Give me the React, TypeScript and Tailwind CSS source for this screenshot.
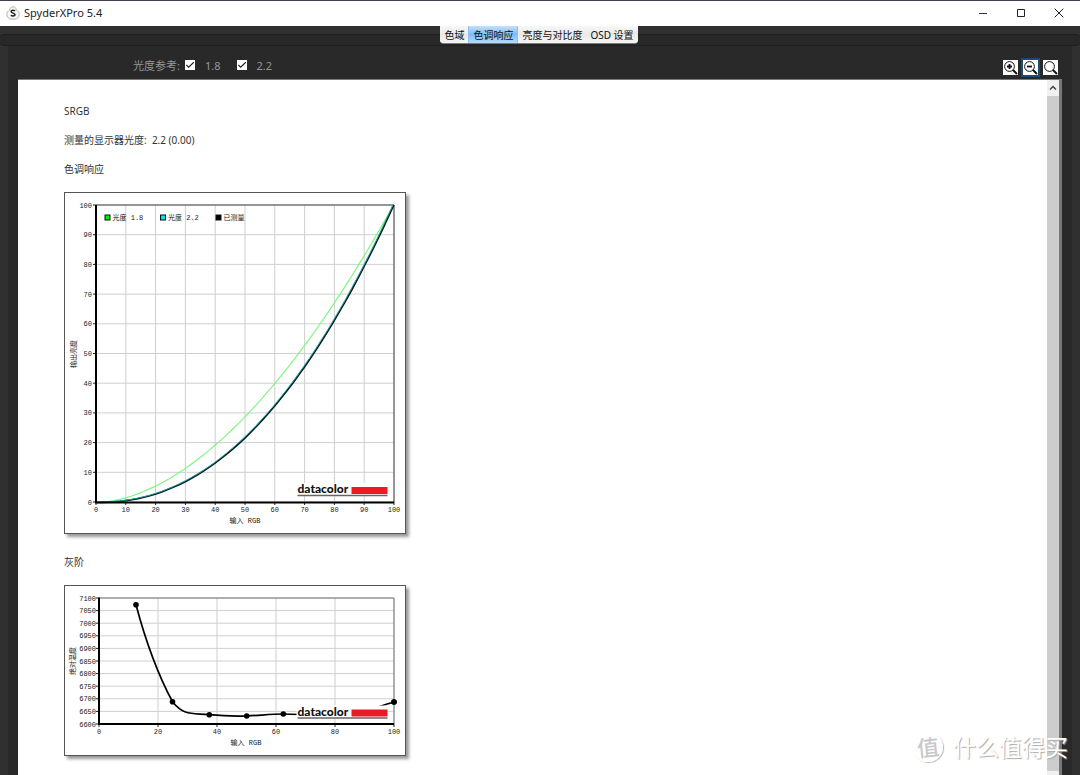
import { useState } from 'react';
import type { ReactNode } from 'react';
import clsx from 'clsx';

const TABS = ['色域', '色调响应', '亮度与对比度', 'OSD 设置'];

const GRID_COLOR = '#cfcfcf';

interface Point {
  x: number;
  y: number;
}

const gammaPath = (gamma: number, left: number, top: number, size: number) => {
  const points: Point[] = [];
  for (let i = 0; i <= 100; i += 2) {
    points.push({
      x: left + (i / 100) * size,
      y: top + (1 - Math.pow(i / 100, gamma)) * size,
    });
  }
  return points.map((p, i) => `${i ? 'L' : 'M'}${p.x.toFixed(1)} ${p.y.toFixed(1)}`).join(' ');
};

function AppIcon() {
  return (
    <svg viewBox="0 0 14 14" className="h-3.5 w-3.5" aria-hidden="true">
      <path
        d="M7 .8c1.900 0 3.200 1.300 3.300 3.200 1.700.7 2.900 2.200 2.900 4.200 0 2.800-2 4.900-4.400 4.900H5.200C2.800 13.100.8 11 .8 8.200c0-2 1.200-3.500 2.900-4.200C3.800 2.100 5.100.8 7 .8z"
        fill="#f6f6f6"
        stroke="#b4b4b4"
      />
      <path
        d="M9 4.900C8.400 4.400 7.700 4.200 7 4.200c-1.200 0-1.900.6-1.900 1.400 0 1.900 3.900 1.100 3.900 3 0 .9-.8 1.400-2 1.400-.8 0-1.600-.2-2.100-.7"
        fill="none"
        stroke="#222"
        strokeWidth="1.500"
      />
    </svg>
  );
}

function TitleBar() {
  const button = 'flex h-6 w-[38px] items-center justify-center';
  return (
    <header className="flex h-[26px] shrink-0 items-center border-t border-[#413f49] bg-white pr-0.5 pb-0.5 pl-1.5">
      <AppIcon />
      <h1 className="ml-1 flex-1 text-[11px] leading-4 text-[#222]">SpyderXPro 5.4</h1>
      <button type="button" aria-label="最小化" className={button}>
        <svg viewBox="0 0 10 10" className="h-2.5 w-2.5" stroke="#333">
          <path d="M1 5.500h8" />
        </svg>
      </button>
      <button type="button" aria-label="最大化" className={button}>
        <svg viewBox="0 0 10 10" className="h-2.5 w-2.5" fill="none" stroke="#222">
          <path d="M1.500 1.500h7v7h-7z" />
        </svg>
      </button>
      <button type="button" aria-label="关闭" className={button}>
        <svg viewBox="0 0 10 10" className="h-2.5 w-2.5" stroke="#222">
          <path d="M.7.7l8.600 8.600M9.300.7L.7 9.300" />
        </svg>
      </button>
    </header>
  );
}

function TabBar() {
  const [active, setActive] = useState(1);
  return (
    <div className="relative flex h-5 shrink-0 justify-center bg-[#303030] pr-0.5">
      <div className="absolute inset-x-0 bottom-0 h-3 rounded border-y border-[#202020] bg-[#282828]" />
      <nav className="relative flex h-[18px] overflow-hidden rounded-b-sm border-b border-[#777] bg-[#f3f3f3]">
        {TABS.map((tab, i) => (
          <button
            key={tab}
            type="button"
            onClick={() => setActive(i)}
            className={clsx(
              'px-1 text-[10px] leading-4 text-[#111]',
              active === i
                ? 'border-x border-[#8fc1f3] bg-linear-to-b from-[#c5e0fb] via-[#7dbbfa] to-[#b5dcff]'
                : 'bg-linear-to-b from-[#f8f8f8] via-[#e9e9e9] to-[#f6f6f6]'
            )}
          >
            {tab}
          </button>
        ))}
      </nav>
    </div>
  );
}

function GammaCheckbox({ label }: { label: string }) {
  const [checked, setChecked] = useState(true);
  return (
    <label className="flex items-center gap-2.5">
      <span className="mb-0.5 grid">
        <input
          type="checkbox"
          checked={checked}
          onChange={(e) => setChecked(e.target.checked)}
          className="col-start-1 row-start-1 h-2.5 w-2.5 appearance-none bg-white"
        />
        {checked && (
          <svg
            viewBox="0 0 11 11"
            className="pointer-events-none col-start-1 row-start-1 h-2.5 w-2.5"
            fill="none"
            stroke="#222"
            strokeWidth="1.300"
          >
            <path d="M1.500 5.500l2.500 2.500L9.700 2.500" />
          </svg>
        )}
      </span>
      <span>{label}</span>
    </label>
  );
}

function ZoomButton({ label, focused, children }: { label: string; focused?: boolean; children?: ReactNode }) {
  return (
    <button
      type="button"
      aria-label={label}
      className={clsx('border-2', focused ? 'border-[#1c4a73]' : 'border-transparent')}
    >
      <svg viewBox="0 0 15 15" className="h-[15px] w-[15px] bg-white" fill="none" stroke="#111">
        <circle cx="6.500" cy="6.500" r="4.900" />
        <path d="M10 10l4 4" strokeWidth="2" />
        {children}
      </svg>
    </button>
  );
}

function Toolbar() {
  return (
    <div className="flex h-[33px] shrink-0 items-center justify-between pt-1.5">
      <fieldset className="ml-[115px] flex items-center text-[11px] leading-4 text-[#969696]">
        <span className="mr-[5px]">光度参考:</span>
        <div className="flex gap-4">
          <GammaCheckbox label="1.8" />
          <GammaCheckbox label="2.2" />
        </div>
      </fieldset>
      <div className="mr-0.5 flex gap-px pt-1">
        <ZoomButton label="放大">
          <path d="M4 6.500h5M6.500 4v5" strokeWidth="1.800" />
        </ZoomButton>
        <ZoomButton label="缩小" focused>
          <path d="M4 6.500h5" strokeWidth="1.800" />
        </ZoomButton>
        <ZoomButton label="适合窗口" />
      </div>
    </div>
  );
}

function DatacolorLogo({ y }: { y: number }) {
  return (
    <g transform={`translate(233.500 ${y})`}>
      <rect x="-1" y="-4" width="91" height="13" fill="#fff" />
      <text x="0" y="6" fontSize="12" fontFamily="Lato" fontWeight="900" fill="#111">
        datacolor
      </text>
      <rect x="54" y="0" width="36" height="7" fill="#ea1b26" />
      <path d="M0 8.500h90" stroke="#666" strokeWidth="1.400" />
    </g>
  );
}

function ChartFrame({ viewBox, title, children }: { viewBox: string; title: string; children: ReactNode }) {
  return (
    <svg
      viewBox={viewBox}
      role="img"
      aria-label={title}
      className="block w-[342px] border border-[#555] bg-white font-['Liberation_Mono','Noto_Sans_CJK_SC',monospace] text-[7px] shadow-[3px_3px_3px_#999]"
      fill="#222"
    >
      {children}
    </svg>
  );
}

function ToneChart() {
  const ticks = Array.from({ length: 11 }, (_, i) => i);
  const legend = [
    { name: '光度 1.8', color: '#00f000' },
    { name: '光度 2.2', color: '#00e5ee' },
    { name: '已测量', color: '#000' },
  ];
  return (
    <ChartFrame viewBox="1 1 340 340" title="色调响应">
      {ticks.map((t) => (
        <g key={t}>
          <path d={`M${32 + t * 29.8} 13v297M32 ${310 - t * 29.7}h298`} stroke={GRID_COLOR} />
          <path d={`M${32 + t * 29.8} 310v3M29 ${310 - t * 29.7}h3`} stroke="#222" />
          <text x={32 + t * 29.8} y="320" textAnchor="middle">
            {t * 10}
          </text>
          <text x="28" y={312.500 - t * 29.7} textAnchor="end">
            {t * 10}
          </text>
        </g>
      ))}
      <path d="M32 13h298V310" fill="none" stroke="#444" />
      <path d={gammaPath(1.8, 32, 13, 297.5)} fill="none" stroke="#82f582" strokeWidth="1.200" />
      <path d={gammaPath(2.2, 32.4, 13, 297.5)} fill="none" stroke="#0a1518" strokeWidth="1.600" />
      <path d={gammaPath(2.2, 31.6, 12.6, 297.5)} fill="none" stroke="#12999e" strokeWidth="1" />
      <path d="M32 13v297.500h298" fill="none" stroke="#000" strokeWidth="2" />
      {legend.map((item, i) => (
        <g key={item.name}>
          <rect x={41 + i * 55.500} y="23" width="5" height="5" fill={item.color} stroke="#111" />
          <text x={48.500 + i * 55.500} y="28">
            {item.name}
          </text>
        </g>
      ))}
      <text x="181" y="331" textAnchor="middle">
        输入 RGB
      </text>
      <text transform="translate(12 162) rotate(-90)" textAnchor="middle">
        输出亮度
      </text>
      <DatacolorLogo y={295} />
    </ChartFrame>
  );
}

function GrayscaleChart() {
  const temps = Array.from({ length: 11 }, (_, i) => 6600 + i * 50);
  const inputs = [0, 20, 40, 60, 80, 100];
  const points: Point[] = [
    { x: 72, y: 19.7 },
    { x: 108.5, y: 116.7 },
    { x: 145.3, y: 129.7 },
    { x: 182.7, y: 131 },
    { x: 219.3, y: 129 },
    { x: 256.3, y: 130 },
    { x: 293, y: 128 },
    { x: 330, y: 117 },
  ];
  return (
    <ChartFrame viewBox="1 1 340 169" title="灰阶">
      {temps.map((temp, i) => (
        <g key={temp}>
          <path d={`M35 ${139 - i * 12.600}h295`} stroke={GRID_COLOR} />
          <path d={`M32 ${139 - i * 12.600}h3`} stroke="#222" />
          <text x="32" y={141.500 - i * 12.600} textAnchor="end">
            {temp}
          </text>
        </g>
      ))}
      {inputs.map((value) => (
        <g key={value}>
          <path d={`M${35 + value * 2.950} 13v126`} stroke={GRID_COLOR} />
          <path d={`M${35 + value * 2.950} 139v3`} stroke="#222" />
          <text x={35 + value * 2.950} y="149" textAnchor="middle">
            {value}
          </text>
        </g>
      ))}
      <path d="M35 13h295v126" fill="none" stroke="#777" />
      <path d="M35 12.500v126.500h295" fill="none" stroke="#000" strokeWidth="2" />
      <path
        d="M72 19.700C79 46 92 86 108.500 116.700C120 131 128 128 145.300 129.700S170 131.500 182.700 131S207 129 219.300 129S244 130 256.300 130S281 131 293 128S316 121 330 117"
        fill="none"
        stroke="#000"
        strokeWidth="1.700"
      />
      {points.map((p) => (
        <circle key={p.x} cx={p.x} cy={p.y} r="2.800" fill="#000" />
      ))}
      <text x="182" y="160" textAnchor="middle">
        输入 RGB
      </text>
      <text transform="translate(11 76) rotate(-90)" textAnchor="middle">
        绝对温度
      </text>
      <DatacolorLogo y={124.500} />
      <circle cx="330" cy="117" r="2.800" fill="#000" />
    </ChartFrame>
  );
}

function ScrollBar() {
  return (
    <div className="flex w-3 shrink-0 flex-col bg-[#f0f0f0] pb-1">
      <button type="button" aria-label="向上滚动" className="flex h-4 shrink-0 items-center justify-center">
        <svg viewBox="0 0 8 8" className="h-2 w-2" fill="none" stroke="#444" strokeWidth="1.500">
          <path d="M1 5.500l3-3 3 3" />
        </svg>
      </button>
      <div className="flex-1 bg-[#cdcdcd]" />
    </div>
  );
}

function Report() {
  return (
    <div className="flex min-h-0 flex-1 border-t border-r-3 border-[#777] bg-white">
      <article className="min-w-0 flex-1 overflow-hidden pt-[23px] pl-[46px] text-[10px] leading-4 text-[#333]">
        <p className="mb-[13px]">SRGB</p>
        <p className="mb-[13px] whitespace-pre">测量的显示器光度:  2.2 (0.00)</p>
        <h2 className="mb-[15px]">色调响应</h2>
        <ToneChart />
        <h2 className="mt-5 mb-[15px]">灰阶</h2>
        <GrayscaleChart />
      </article>
      <ScrollBar />
    </div>
  );
}

function Watermark() {
  return (
    <div className="pointer-events-none absolute right-3 bottom-3 flex items-center gap-2.5 text-white [text-shadow:1px_1px_1px_#aaa]">
      <span className="flex h-[30px] w-[30px] -rotate-6 items-center justify-center rounded-full border border-white text-[22px] leading-none font-medium text-[#c8c8c8] shadow-[1px_1px_1px_#bbb] [text-shadow:none]">
        值
      </span>
      <span className="text-[23px] leading-8">什么值得买</span>
    </div>
  );
}

export default function App() {
  return (
    <div className="relative flex h-screen flex-col overflow-hidden bg-[#292929] font-['Noto_Sans','Noto_Sans_CJK_SC',sans-serif]">
      <TitleBar />
      <TabBar />
      <main className="flex min-h-0 flex-1 flex-col border-x-8 border-[#303030] px-2.5">
        <Toolbar />
        <Report />
      </main>
      <Watermark />
    </div>
  );
}
